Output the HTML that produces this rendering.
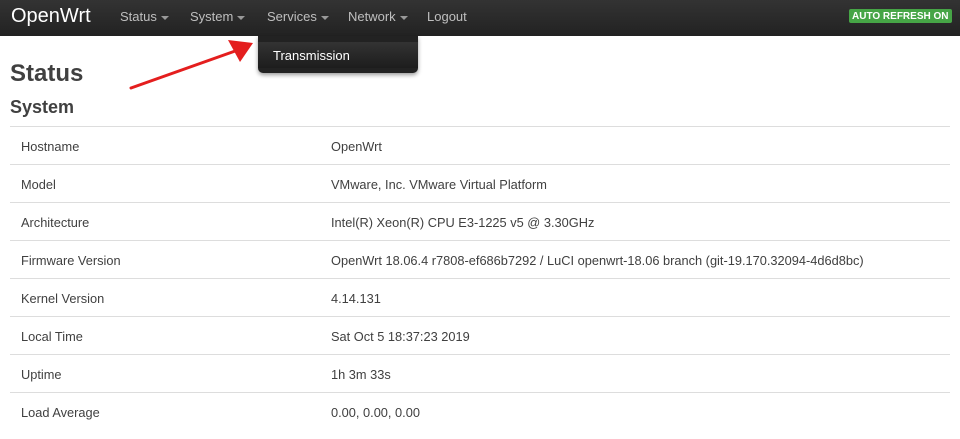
<!DOCTYPE html>
<html><head><style>
body{margin:0;width:960px;height:439px;overflow:hidden;background:#fff;font-family:"Liberation Sans",sans-serif;color:#404040;position:relative}
.nav{position:absolute;left:0;top:0;width:960px;height:36px;background:linear-gradient(#333,#222);}
.brand{position:absolute;left:11px;top:5px;font-size:20px;color:#fff}
.m{position:absolute;top:9px;font-size:13px;color:#bfbfbf}
.c{display:inline-block;width:0;height:0;border-left:4px solid transparent;border-right:4px solid transparent;border-top:4px solid #999;vertical-align:middle;margin-left:4px}
.badge{position:absolute;left:849px;top:9px;background:#46a546;color:#fff;font-size:10px;font-weight:bold;padding:2px 3px 1px;border-radius:2px;line-height:11px}
.dd{position:absolute;left:258px;top:36px;width:160px;height:37px;background:#222;border-radius:0 0 5px 5px;box-shadow:0 2px 4px rgba(0,0,0,.4)}
.dd div{position:absolute;left:0;top:6px;width:160px;height:26px;background:linear-gradient(#333,#1d1d1d);color:#fff;font-size:13px;line-height:28px;text-indent:15px}
h1{position:absolute;left:10px;top:60px;margin:0;font-size:24px;font-weight:bold;color:#404040}
h2{position:absolute;left:10px;top:97px;margin:0;font-size:18px;font-weight:bold;color:#404040}
.r{position:absolute;left:10px;width:940px;height:38px;border-top:1px solid #ddd;font-size:12.8px;line-height:40px}
.r span{position:absolute;left:11px}.r b{font-weight:normal;position:absolute;left:321px}
</style></head><body>
<div class="nav"><div class="brand">OpenWrt</div>
<div class="m" style="left:120px">Status<span class="c"></span></div>
<div class="m" style="left:190px">System<span class="c"></span></div>
<div class="m" style="left:267px">Services<span class="c"></span></div>
<div class="m" style="left:348px">Network<span class="c"></span></div>
<div class="m" style="left:427px">Logout</div>
<div class="badge">AUTO REFRESH ON</div></div>
<div class="dd"><div>Transmission</div></div>
<svg style="position:absolute;left:0;top:0" width="300" height="100"><line x1="131" y1="88" x2="238" y2="50" stroke="#e41e1e" stroke-width="3" stroke-linecap="round"/><polygon points="253,43 228,40 240,62" fill="#e41e1e"/></svg>
<h1>Status</h1><h2>System</h2>
<div class="r" style="top:126px"><span>Hostname</span><b>OpenWrt</b></div>
<div class="r" style="top:164px"><span>Model</span><b>VMware, Inc. VMware Virtual Platform</b></div>
<div class="r" style="top:202px"><span>Architecture</span><b>Intel(R) Xeon(R) CPU E3-1225 v5 @ 3.30GHz</b></div>
<div class="r" style="top:240px"><span>Firmware Version</span><b>OpenWrt 18.06.4 r7808-ef686b7292 / LuCI openwrt-18.06 branch (git-19.170.32094-4d6d8bc)</b></div>
<div class="r" style="top:278px"><span>Kernel Version</span><b>4.14.131</b></div>
<div class="r" style="top:316px"><span>Local Time</span><b>Sat Oct 5 18:37:23 2019</b></div>
<div class="r" style="top:354px"><span>Uptime</span><b>1h 3m 33s</b></div>
<div class="r" style="top:392px"><span>Load Average</span><b>0.00, 0.00, 0.00</b></div>
</body></html>
